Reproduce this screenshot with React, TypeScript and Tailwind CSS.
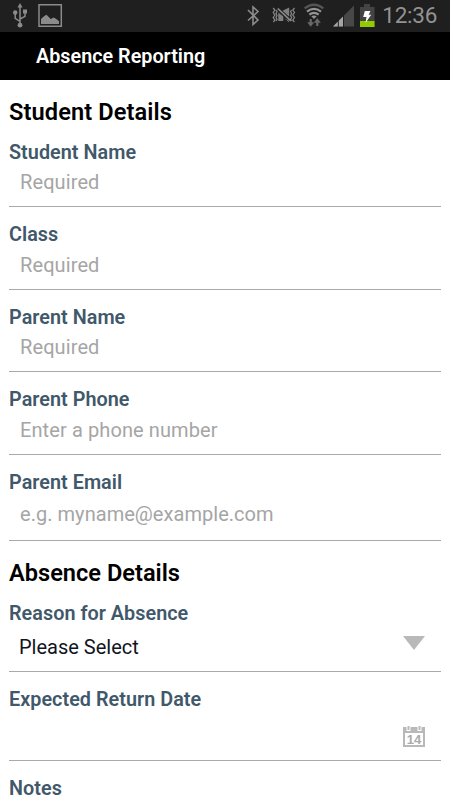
import React from 'react';

const labelClass = 'block h-6 whitespace-nowrap text-[19.8px] leading-[26px] font-semibold tracking-[0.04px] text-[#3f586a]';

function StatusBar() {
  return (
    <header className="flex h-8 shrink-0 items-start bg-[#1f1f1f]">
      <svg width="450" height="32" viewBox="0 0 450 32" fill="none">
        <g stroke="#8b8b8b" strokeWidth="1.5">
          <path d="M20 25V7M20 21.5l-4.8-3.2V13M20 19l5-2.6V11" />
          <g fill="#8b8b8b" stroke="none">
            <path d="M20 3l2.5 4.5h-5z" />
            <circle cx="20" cy="25.2" r="2.4" />
            <circle cx="15.2" cy="12.5" r="2.2" />
            <path d="M23 9.5h4v4h-4z" />
          </g>
        </g>
        <path d="M39 4.7h22.3v21.6H39z" stroke="#8b8b8b" strokeWidth="1.5" />
        <path d="M41 24v-5l3.3-3 2.2-1.2 4.2 4.3 3-1.5 3 1.7 2.3 2V24z" fill="#8b8b8b" />
        <path d="M248 10l10 10-5 4.5V7l5 4.5-10 9" stroke="#8b8b8b" strokeWidth="1.6" />
        <g stroke="#858585" strokeWidth="1.3">
          <path d="M273.2 8l1.7 2-1.7 2.5 1.7 2.5-1.7 2.5 1.7 2.5-1.5 2M276 10l1 1.5-1 2 1 2-1 2 1 2-1 1.5M294.5 8l-1.7 2 1.7 2.5-1.7 2.5 1.7 2.5-1.7 2.5 1.5 2M291.6 10l-1 1.5 1 2-1 2 1 2-1 2 1 1.5" />
        </g>
        <path d="M278.3 12.5l5 4v4.5h-5zM282.5 10.8l6.7-3.3v9.2z" fill="#808080" />
        <path d="M277.8 8.5l13 12.3" stroke="#8b8b8b" strokeWidth="1.7" />
        <path d="M284 18l5 4.2v-1.5z" fill="#808080" />
        <path d="M304.7 8.4q9.3-7.2 18.6 0" stroke="#555" strokeWidth="2.4" />
        <path d="M307 11.7q7-5.5 14 0M309.3 14.6q4.7-3.6 9.4 0" stroke="#949494" strokeWidth="2.2" />
        <path d="M311.3 16.3q2.7-1.7 5.4 0L314 19z" fill="#949494" />
        <path d="M310.7 19v5M317.3 26v-5" stroke="#686868" strokeWidth="2.2" />
        <path d="M307.2 22.3h7l-3.5 4.5zM313.8 22.7h7l-3.5-4.7z" fill="#686868" />
        <path d="M333 26.5L354 5.5v21z" fill="#484848" />
        <path d="M333 26.5l10-10v10z" fill="#a5a5a5" />
        <path d="M338.3 15v12M343.5 15v12" stroke="#1f1f1f" />
        <path d="M364 4h6v3h4.5v20H360V7h4z" fill="#444" />
        <path d="M360 21h14.5v6H360z" fill="#91cc00" />
        <path d="M364.8 11h5.6l-1.7 3.8h2.5l-5.7 8.2 1-6h-3.3z" fill="#fff" />
        <text x="382.3" y="23.3" fill="#939393" fontFamily="Roboto, sans-serif" fontSize="22.5" fontWeight="400" textLength="55">12:36</text>
      </svg>
    </header>
  );
}

function Field({ label, hint }: { label: string; hint: string }) {
  return (
    <label className="block h-[82.5px]">
      <span className={labelClass}>{label}</span>
      <input placeholder={hint} className="block h-[43.5px] w-full border-b border-[#aaa] pt-0 pb-[5.6px] pl-[11px] text-[20px] leading-9 tracking-[0.1px] text-black outline-none placeholder:text-[#a5a5a5]" />
    </label>
  );
}

function CalendarIcon() {
  return (
    <svg width="22" height="23" viewBox="0 0 22 23" fill="none">
      <path d="M0 2h22v20H0z" fill="#b9b9b9" />
      <path d="M2 8h18v12H2z" fill="#fff" />
      <path d="M3.5 1h4v5h-4zM14.5 1h4v5h-4z" fill="#fff" />
      <path d="M5.5 1v4M16.5 1v4" stroke="#b9b9b9" strokeWidth="2" />
      <text x="3.8" y="18.5" fill="#aaa" fontFamily="'Liberation Sans', Arial, sans-serif" fontSize="13" fontWeight="700">14</text>
    </svg>
  );
}

export default function App() {
  return (
    <div className="flex h-[800px] w-[450px] flex-col overflow-hidden bg-white font-[Roboto,sans-serif]">
      <StatusBar />
      <div className="flex h-12 shrink-0 items-center bg-black pt-px pl-9 text-[19.8px] font-semibold text-white">
        Absence Reporting
      </div>
      <main className="px-[9px] pt-[15.6px]">
        <h1 className="mb-3 h-8 text-[23.6px] leading-8 font-semibold tracking-[0.1px] text-black">Student Details</h1>
        <Field label="Student Name" hint="Required" />
        <Field label="Class" hint="Required" />
        <Field label="Parent Name" hint="Required" />
        <Field label="Parent Phone" hint="Enter a phone number" />
        <label className="block h-[71px]">
          <span className={labelClass}>Parent Email</span>
          <input placeholder="e.g. myname@example.com" className="block h-[47px] w-full border-b border-[#aaa] pb-[6px] pl-[11px] text-[20px] tracking-[0.04px] text-black outline-none placeholder:text-[#a5a5a5]" />
        </label>
        <h1 className="mt-4 mb-3 h-8 text-[23.6px] leading-8 font-semibold text-black">Absence Details</h1>
        <span className={labelClass}>Reason for Absence</span>
        <button className="flex h-[47px] w-full items-center justify-between border-b border-[#aaa] pr-4 pb-[2px] pl-[10px] text-[20px] text-[#101522]">
          Please Select
          <svg className="mb-2" width="22" height="14" viewBox="0 0 22 14"><path d="M0 0h22L11 14z" fill="#b9b9b9" /></svg>
        </button>
        <div className="mt-[15px]">
          <span className={labelClass}>Expected Return Date</span>
          <div className="flex h-[50px] items-end justify-end border-b border-[#aaa] pr-4 pb-3">
            <CalendarIcon />
          </div>
        </div>
        <span className={`${labelClass} mt-[15px]`}>Notes</span>
      </main>
    </div>
  );
}
